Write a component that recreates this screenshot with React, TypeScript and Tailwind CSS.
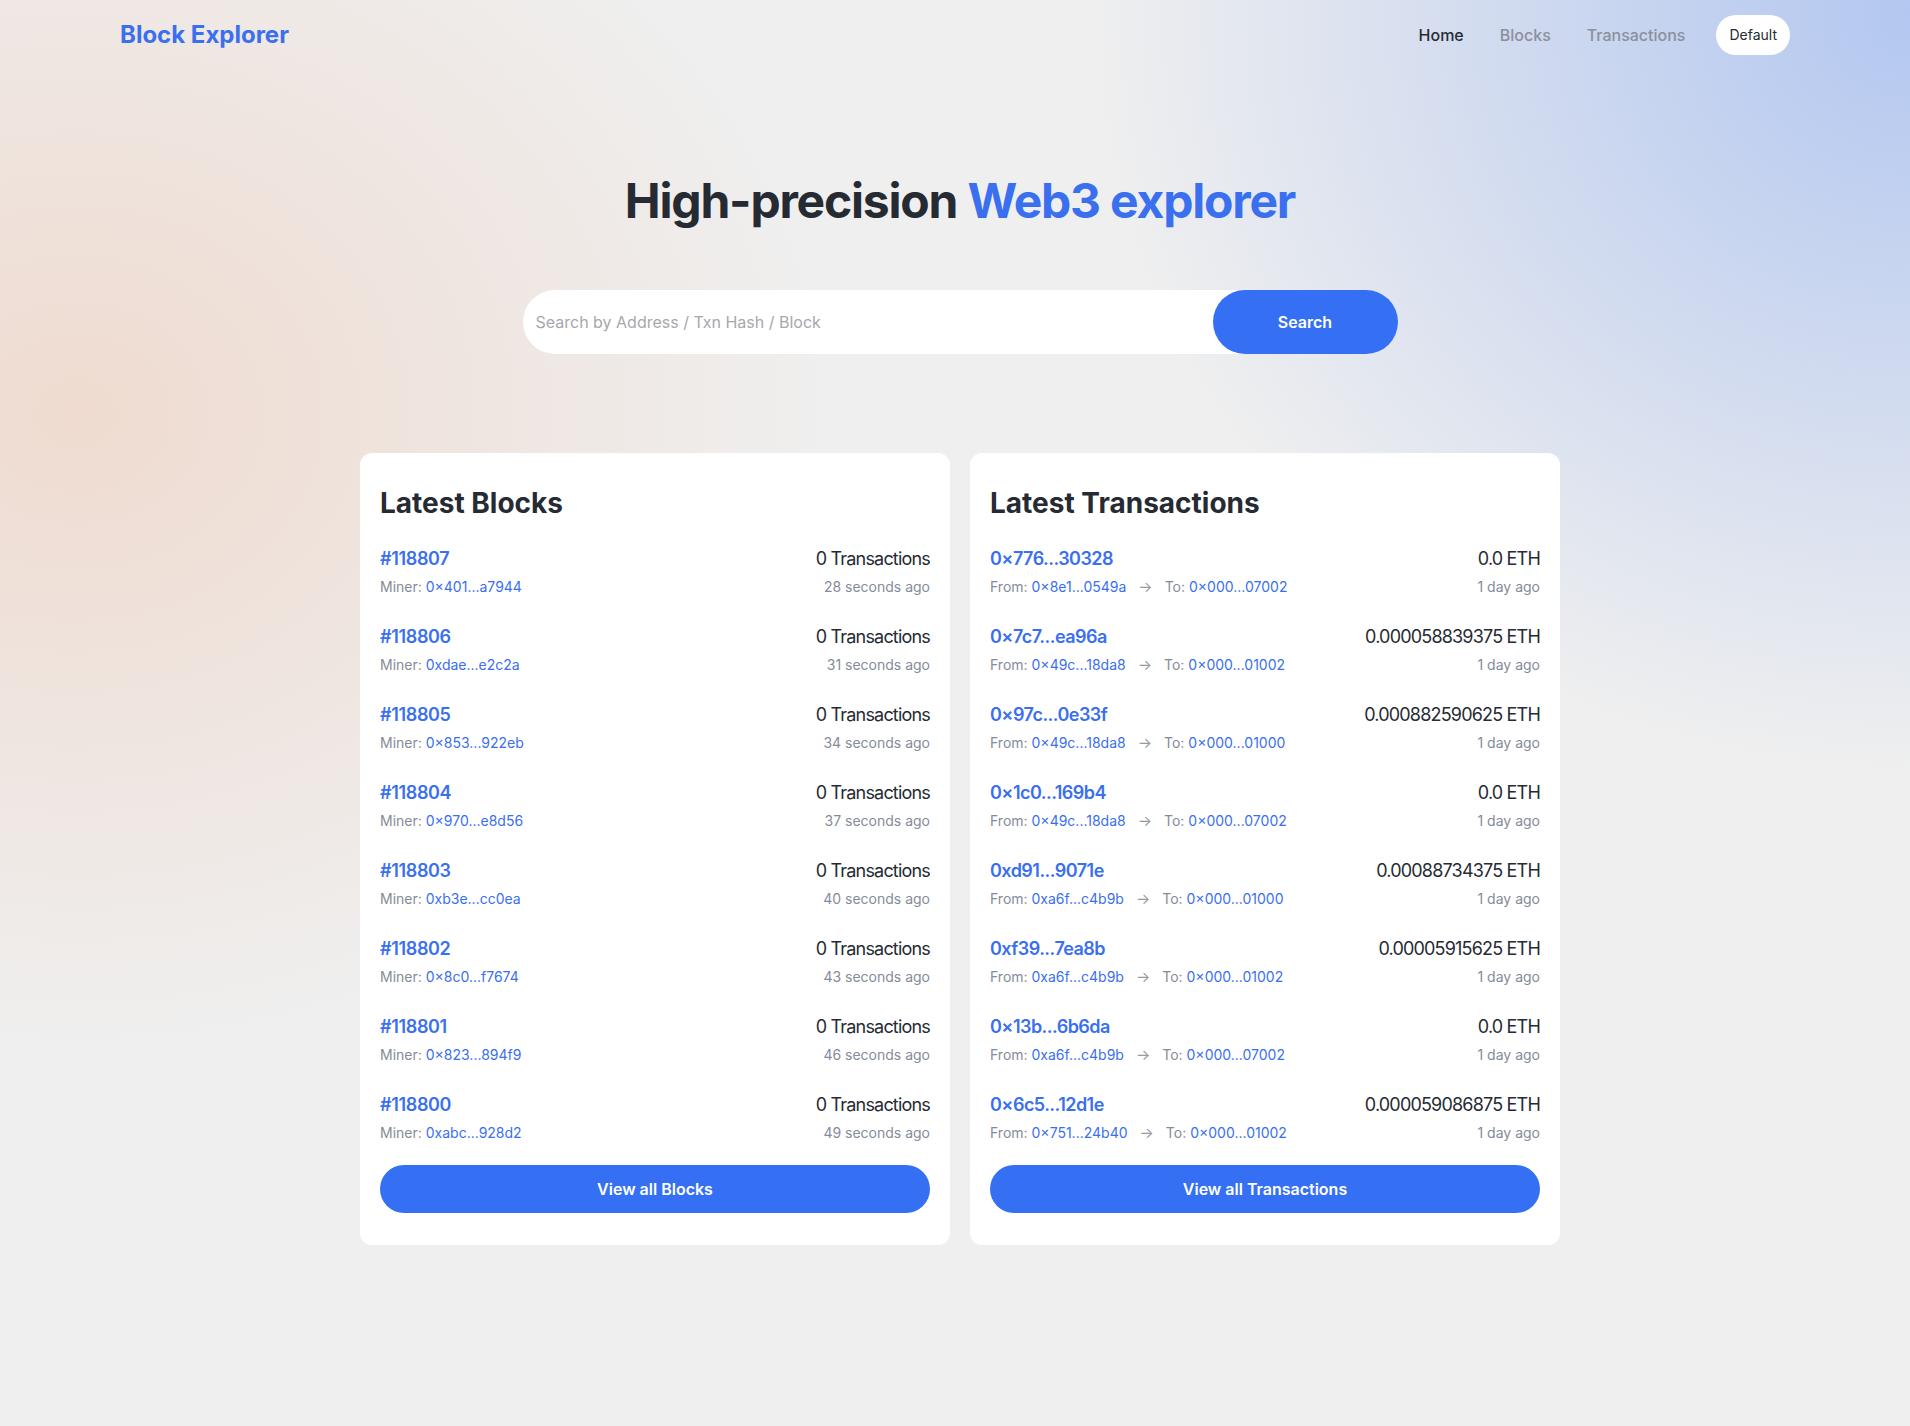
import React from 'react';

type Block = { num: string; miner: string; age: string };
type Txn = { hash: string; value: string; from: string; to: string; age: string };

const blocks: Block[] = [
  { num: '#118807', miner: '0×401...a7944', age: '28 seconds ago' },
  { num: '#118806', miner: '0xdae...e2c2a', age: '31 seconds ago' },
  { num: '#118805', miner: '0×853...922eb', age: '34 seconds ago' },
  { num: '#118804', miner: '0×970...e8d56', age: '37 seconds ago' },
  { num: '#118803', miner: '0xb3e...cc0ea', age: '40 seconds ago' },
  { num: '#118802', miner: '0×8c0...f7674', age: '43 seconds ago' },
  { num: '#118801', miner: '0×823...894f9', age: '46 seconds ago' },
  { num: '#118800', miner: '0xabc...928d2', age: '49 seconds ago' },
];

const txns: Txn[] = [
  { hash: '0×776...30328', value: '0.0 ETH', from: '0×8e1...0549a', to: '0×000...07002', age: '1 day ago' },
  { hash: '0×7c7...ea96a', value: '0.000058839375 ETH', from: '0×49c...18da8', to: '0×000...01002', age: '1 day ago' },
  { hash: '0×97c...0e33f', value: '0.000882590625 ETH', from: '0×49c...18da8', to: '0×000...01000', age: '1 day ago' },
  { hash: '0×1c0...169b4', value: '0.0 ETH', from: '0×49c...18da8', to: '0×000...07002', age: '1 day ago' },
  { hash: '0xd91...9071e', value: '0.00088734375 ETH', from: '0xa6f...c4b9b', to: '0×000...01000', age: '1 day ago' },
  { hash: '0xf39...7ea8b', value: '0.00005915625 ETH', from: '0xa6f...c4b9b', to: '0×000...01002', age: '1 day ago' },
  { hash: '0×13b...6b6da', value: '0.0 ETH', from: '0xa6f...c4b9b', to: '0×000...07002', age: '1 day ago' },
  { hash: '0×6c5...12d1e', value: '0.000059086875 ETH', from: '0×751...24b40', to: '0×000...01002', age: '1 day ago' },
];

const Header: React.FC = () => {
  return (
    <header className="flex items-center justify-between px-30 h-[70px]">
      <a className="text-2xl font-bold text-[#3a6ff0]">Block Explorer</a>
      <nav className="flex items-center">
        <a className="text-base font-medium text-[#262b33]">Home</a>
        <a className="ml-[36px] text-base font-medium text-[#8a909c]">Blocks</a>
        <a className="ml-[36px] text-base font-medium text-[#8a909c]">Transactions</a>
        <button className="ml-[31px] h-10 px-[13px] rounded-full bg-white text-sm font-normal text-[#262b33]">Default</button>
      </nav>
    </header>
  );
};

const Hero: React.FC = () => {
  return (
    <section className="flex flex-col items-center pt-[107px] pl-[10px]">
      <h1 className="text-5xl leading-none font-bold tracking-tight text-[#262b33]">
        High-precision <span className="text-[#3a6ff0]">Web3 explorer</span>
      </h1>
      <div className="mt-[65px] flex w-[875px] h-16 rounded-full bg-white">
        <input
          className="flex-1 pl-[13px] bg-transparent text-base text-[#262b33] placeholder:text-[#a6a8ad] outline-none"
          placeholder="Search by Address / Txn Hash / Block"
        />
        <button className="w-[185px] h-16 rounded-full bg-[#356ff3] text-base font-semibold text-white">Search</button>
      </div>
    </section>
  );
};

const Card: React.FC<{ title: string; button: string; children: React.ReactNode }> = ({ title, button, children }) => {
  return (
    <div className="flex-1 bg-white rounded-xl px-5 pt-8 pb-8">
      <h2 className="text-[28px] leading-9 font-bold text-[#262b33]">{title}</h2>
      <div className="mt-6 flex flex-col gap-[26px]">{children}</div>
      <button className="mt-[22px] w-full h-12 rounded-full bg-[#356ff3] text-base font-semibold text-white">{button}</button>
    </div>
  );
};

const BlockRow: React.FC<{ b: Block }> = ({ b }) => {
  return (
    <div className="flex flex-col">
      <div className="flex justify-between leading-7 text-lg">
        <a className="font-semibold tracking-[-0.02em] text-[#3a6ff0]">{b.num}</a>
        <span className="tracking-[-0.045em] text-[#262b33]">0 Transactions</span>
      </div>
      <div className="mt-1 flex justify-between text-sm leading-5">
        <span className="text-[#858c99]">
          Miner: <a className="text-[#3a6ff0]">{b.miner}</a>
        </span>
        <span className="text-[#858c99]">{b.age}</span>
      </div>
    </div>
  );
};

const TxnRow: React.FC<{ t: Txn }> = ({ t }) => {
  return (
    <div className="flex flex-col">
      <div className="flex justify-between leading-7 text-lg">
        <a className="font-semibold tracking-[-0.03em] text-[#3a6ff0]">{t.hash}</a>
        <span className="tracking-[-0.045em] text-[#262b33]">{t.value}</span>
      </div>
      <div className="mt-1 flex justify-between text-sm leading-5">
        <div className="flex items-center text-[#858c99]">
          <span>
            From: <a className="text-[#3a6ff0]">{t.from}</a>
          </span>
          <span className="mx-[12px] text-[15px] text-[#969aa3]">→</span>
          <span>
            To: <a className="text-[#3a6ff0]">{t.to}</a>
          </span>
        </div>
        <span className="text-[#858c99]">{t.age}</span>
      </div>
    </div>
  );
};

export default function App() {
  return (
    <div className="min-h-screen bg-[#efefef] bg-[image:radial-gradient(ellipse_820px_760px_at_100%_1%,rgba(176,197,240,0.95),rgba(176,197,240,0)),radial-gradient(ellipse_760px_640px_at_4%_29%,rgba(239,214,200,0.8),rgba(239,214,200,0))] font-['Inter',sans-serif] pb-20">
      <Header />
      <Hero />
      <main className="mt-[99px] pl-[10px] flex justify-center">
        <div className="w-[1200px] flex items-start gap-5">
          <Card title="Latest Blocks" button="View all Blocks">
            {blocks.map((b) => (
              <BlockRow key={b.num} b={b} />
            ))}
          </Card>
          <Card title="Latest Transactions" button="View all Transactions">
            {txns.map((t) => (
              <TxnRow key={t.hash} t={t} />
            ))}
          </Card>
        </div>
      </main>
    </div>
  );
}
